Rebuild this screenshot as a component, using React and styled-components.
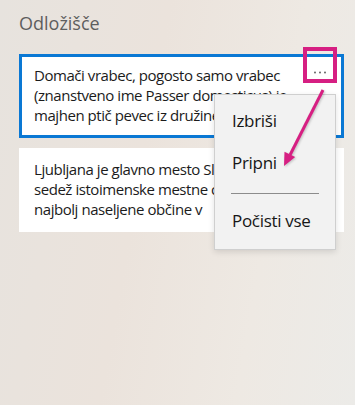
import React from 'react';
import styled, { createGlobalStyle } from 'styled-components';

const GlobalStyle = createGlobalStyle`
  html, body {
    margin: 0;
    padding: 0;
    height: 100%;
  }
  body {
    font-family: "Open Sans", "Noto Sans", sans-serif;
    background: linear-gradient(100deg, #e7e3de 0%, #ebe3dc 40%, #eee9e3 72%, #ecebe8 100%);
  }
  #root {
    min-height: 100vh;
  }
`;

const Page = styled.div`
  position: relative;
  padding: 10px 11px 0 19px;
  height: 405px;
  box-sizing: border-box;
`;

const Title = styled.h1`
  margin: 0 0 18px 0;
  font-size: 18px;
  font-weight: 400;
  line-height: 26px;
  color: #5e5e5e;
`;

const List = styled.div`
  display: flex;
  flex-direction: column;
  gap: 10px;
`;

const Card = styled.div`
  display: flex;
  align-items: flex-start;
  background: #ffffff;
  border: 3px solid ${(p) => (p.$selected ? '#0a78d4' : '#ffffff')};
  padding: 8px 11px 10px 12px;
`;

const CardText = styled.p`
  flex: 1;
  margin: 0;
  font-size: 15px;
  line-height: 20px;
  letter-spacing: -0.45px;
  color: #1b1b1b;
  white-space: nowrap;
  overflow: hidden;
`;

const MoreButton = styled.div`
  width: 20px;
  height: 14px;
  display: flex;
`;

const Menu = styled.div`
  position: absolute;
  left: 214px;
  top: 94px;
  width: 122px;
  box-sizing: border-box;
  background: #f2f2f2;
  border: 1px solid #cfcfcf;
  box-shadow: 0 2px 6px rgba(0, 0, 0, 0.12);
  padding: 5px 0 7px 0;
`;

const MenuItem = styled.div`
  padding: 11px 17px;
  font-size: 17px;
  line-height: 20px;
  letter-spacing: -0.3px;
  color: #161616;
`;

const Separator = styled.div`
  height: 1px;
  background: #8c8c8c;
  margin: 9px 16px 6px 16px;
`;

const Callout = styled.div`
  position: absolute;
  left: 303px;
  top: 47px;
  width: 34px;
  height: 36px;
  box-sizing: border-box;
  border: 4px solid #d61f82;
`;

const Arrow = styled.svg`
  position: absolute;
  left: 270px;
  top: 80px;
  overflow: visible;
  filter: drop-shadow(1px 1px 1px rgba(0, 0, 0, 0.2));
`;

export default function App() {
  return (
    <>
      <GlobalStyle />
      <Page>
        <Title>Odložišče</Title>
        <List>
          <Card $selected>
            <CardText>
              Domači vrabec, pogosto samo vrabec
              <br />
              (znanstveno ime Passer domesticus) je
              <br />
              majhen ptič pevec iz družine vrabcev
            </CardText>
            <MoreButton>
              <svg width="20" height="14" viewBox="0 0 20 14">
                <circle cx="5" cy="7.5" r="0.9" fill="#555" />
                <circle cx="10" cy="7.5" r="0.9" fill="#555" />
                <circle cx="15" cy="7.5" r="0.9" fill="#555" />
              </svg>
            </MoreButton>
          </Card>
          <Card>
            <CardText>
              Ljubljana je glavno mesto Slovenije in
              <br />
              sedež istoimenske mestne občine ter
              <br />
              najbolj naseljene občine v
            </CardText>
          </Card>
        </List>

        <Menu>
          <MenuItem>Izbriši</MenuItem>
          <MenuItem>Pripni</MenuItem>
          <Separator />
          <MenuItem>Počisti vse</MenuItem>
        </Menu>

        <Callout />
        <Arrow width="70" height="100" viewBox="0 0 70 100">
          <line x1="53" y1="10" x2="20" y2="75" stroke="#d61f82" strokeWidth="3" />
          <polygon points="14,86 25.2,77.1 14.5,71.7" fill="#d61f82" />
        </Arrow>
      </Page>
    </>
  );
}
